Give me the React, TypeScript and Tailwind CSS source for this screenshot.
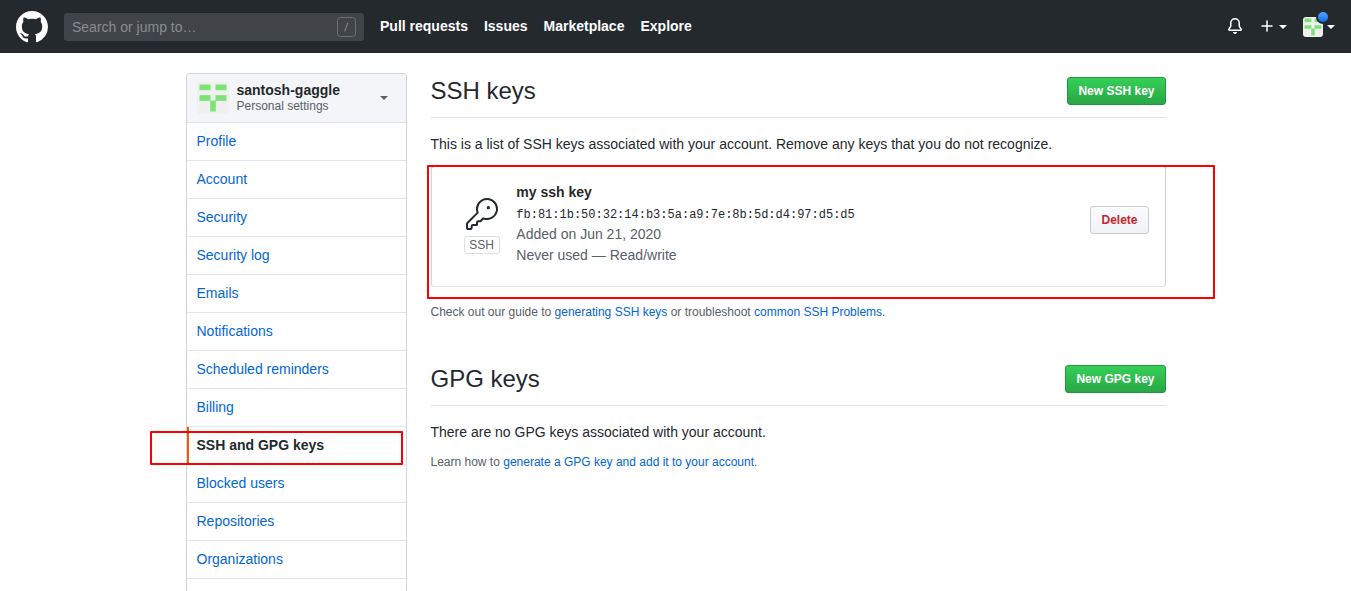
import React from "react";

function GithubMark() {
  return (
    <svg className="h-8 w-8 fill-white" viewBox="0 0 16 16">
      <path
        fillRule="evenodd"
        d="M8 0C3.58 0 0 3.58 0 8c0 3.54 2.29 6.53 5.47 7.59.4.07.55-.17.55-.38 0-.19-.01-.82-.01-1.49-2.01.37-2.53-.49-2.69-.94-.09-.23-.48-.94-.82-1.13-.28-.15-.68-.52-.01-.53.63-.01 1.08.58 1.23.82.72 1.21 1.87.87 2.33.66.07-.52.28-.87.51-1.07-1.78-.2-3.64-.89-3.64-3.95 0-.87.31-1.59.82-2.15-.08-.2-.36-1.02.08-2.12 0 0 .67-.21 2.2.82.64-.18 1.32-.27 2-.27s1.36.09 2 .27c1.53-1.04 2.2-.82 2.2-.82.44 1.1.16 1.92.08 2.12.51.56.82 1.27.82 2.15 0 3.07-1.87 3.75-3.65 3.95.29.25.54.73.54 1.48 0 1.07-.01 1.93-.01 2.2 0 .21.15.46.55.38A8.01 8.01 0 0016 8c0-4.42-3.58-8-8-8z"
      />
    </svg>
  );
}

function BellIcon() {
  return (
    <svg className="h-4 w-4 fill-white" viewBox="0 0 16 16">
      <path d="M8 16a2 2 0 001.985-1.75c.017-.137-.097-.25-.235-.25h-3.5c-.138 0-.252.113-.235.25A2 2 0 008 16z" />
      <path
        fillRule="evenodd"
        d="M8 1.5A3.5 3.5 0 004.5 5v2.947c0 .346-.102.683-.294.97l-1.703 2.556a.018.018 0 00-.003.01l.001.006c0 .002.002.004.004.006a.017.017 0 00.006.004l.007.001h10.964l.007-.001a.016.016 0 00.006-.004.016.016 0 00.004-.006l.001-.007a.017.017 0 00-.003-.01l-1.703-2.554a1.75 1.75 0 01-.294-.97V5A3.5 3.5 0 008 1.5zM3 5a5 5 0 0110 0v2.947c0 .05.015.098.042.139l1.703 2.555A1.518 1.518 0 0113.482 13H2.518a1.518 1.518 0 01-1.263-2.36l1.703-2.554A.25.25 0 003 7.947V5z"
      />
    </svg>
  );
}

function PlusIcon() {
  return (
    <svg className="h-4 w-4 fill-white" viewBox="-0.25 -0.25 16 16">
      <path d="M7.75 2a.75.75 0 01.75.75V7h4.25a.75.75 0 110 1.5H8.5v4.25a.75.75 0 11-1.5 0V8.5H2.75a.75.75 0 010-1.5H7V2.75A.75.75 0 017.75 2z" />
    </svg>
  );
}

function KeyIcon() {
  return (
    <svg className="h-8 w-8 fill-[#24292e]" viewBox="0 0 24 24">
      <path d="M16.75 8.5a1.25 1.25 0 100-2.5 1.25 1.25 0 000 2.5z" />
      <path
        fillRule="evenodd"
        d="M15.75 0a8.25 8.25 0 00-7.851 10.79L.513 18.178A1.75 1.75 0 000 19.414v2.836C0 23.217.784 24 1.75 24h1.5A1.75 1.75 0 005 22.25v-1a.25.25 0 01.25-.25h2.735a.75.75 0 00.545-.22l.214-.213A.875.875 0 009 19.948V18.5a.25.25 0 01.25-.25h1.086c.464 0 .91-.184 1.237-.513l1.636-1.636A8.25 8.25 0 1015.75 0zM9 8.25a6.75 6.75 0 114.288 6.287.75.75 0 00-.804.168l-1.971 1.972a.25.25 0 01-.177.073H9.25A1.75 1.75 0 007.5 18.5v1H5.25a1.75 1.75 0 00-1.75 1.75v1a.25.25 0 01-.25.25h-1.5a.25.25 0 01-.25-.25v-2.836a.25.25 0 01.073-.177l7.722-7.721a.75.75 0 00.168-.804A6.73 6.73 0 019 8.25z"
      />
    </svg>
  );
}

function Caret({ className = "" }: { className?: string }) {
  return (
    <span
      className={`h-0 w-0 border-x-4 border-t-4 border-x-transparent ${className}`}
    />
  );
}

function Identicon({ className = "" }: { className?: string }) {
  return (
    <svg className={`block ${className}`} viewBox="0 0 420 420">
      <rect width="420" height="420" fill="#f0f0f0" />
      <g fill="#7ce376">
        <rect x="33" y="33" width="144" height="74" />
        <rect x="243" y="33" width="144" height="74" />
        <rect x="33" y="173" width="144" height="74" />
        <rect x="243" y="173" width="144" height="74" />
        <rect x="173" y="243" width="74" height="144" />
      </g>
    </svg>
  );
}

const NAV = ["Pull requests", "Issues", "Marketplace", "Explore"];

function Header() {
  return (
    <header className="flex h-[53px] items-center bg-[#24292e] px-4 pb-px pt-0.5">
      <GithubMark />
      <div className="ml-4 flex h-7 w-[300px] items-center justify-between rounded-[3px] bg-[#404448] pl-2 pr-2">
        <span className="text-sm text-[#8a8d90]">Search or jump to…</span>
        <svg className="h-5 w-[19px]" viewBox="0 0 19 20" fill="none" stroke="#6c7074">
          <rect x="0.5" y="0.5" width="18" height="19" rx="3" />
          <path d="M10.9 5.8L7.6 14.5" stroke="#8d9094" />
        </svg>
      </div>
      <nav className="ml-4 flex gap-4 pb-0.5 text-sm font-bold leading-[21px] text-white">
        {NAV.map((n) => (
          <a key={n}>{n}</a>
        ))}
      </nav>
      <div className="ml-auto flex items-center pb-0.5">
        <BellIcon />
        <div className="ml-4 flex items-center gap-1">
          <PlusIcon />
          <Caret className="mt-0.5 border-t-white" />
        </div>
        <div className="relative ml-4 flex items-center gap-1">
          <Identicon className="mt-0.5 h-5 w-5 rounded-[3px]" />
          <Caret className="mt-0.5 border-t-white" />
          <span className="absolute left-[13px] top-[-5px] flex h-3.5 w-3.5 items-center justify-center rounded-full bg-[#24292e]">
            <span className="h-2.5 w-2.5 rounded-full bg-linear-to-b from-[#54a3ff] to-[#006eed]" />
          </span>
        </div>
      </div>
    </header>
  );
}

const MENU = [
  "Profile",
  "Account",
  "Security",
  "Security log",
  "Emails",
  "Notifications",
  "Scheduled reminders",
  "Billing",
  "SSH and GPG keys",
  "Blocked users",
  "Repositories",
  "Organizations",
];

function MenuItem({ label }: { label: string }) {
  if (label === "SSH and GPG keys") {
    return (
      <div className="relative flex h-[38px] border-b border-[#e1e4e8] font-bold">
        <span className="w-0.5 bg-[#e36209]" />
        <a className="py-2 pl-2">{label}</a>
        <span className="absolute left-[-37px] top-1 h-[34px] w-[253px] rounded-[1px] border-2 border-[#ff0000]" />
      </div>
    );
  }
  return (
    <a className="block h-[38px] border-b border-[#e1e4e8] px-2.5 py-2 text-[#0366d6]">
      {label}
    </a>
  );
}

function Sidebar() {
  return (
    <aside className="h-[560px] w-[221px] shrink-0 rounded-[3px] border border-[#d1d5da] text-sm leading-[21px]">
      <div className="flex h-[49px] items-center rounded-t-[2px] border-b border-[#e1e4e8] bg-[#f3f5f8] pl-[10.5px] pr-[18px]">
        <Identicon className="h-8 w-8 rounded-[3px]" />
        <div className="ml-[7.5px]">
          <div className="font-bold leading-[17px]">santosh-gaggle</div>
          <div className="text-xs leading-[15px] text-[#586069]">Personal settings</div>
        </div>
        <Caret className="ml-auto border-t-[#586069]" />
      </div>
      {MENU.map((m) => (
        <MenuItem key={m} label={m} />
      ))}
    </aside>
  );
}

function SectionHead({ title, action }: { title: string; action: string }) {
  return (
    <div className="flex h-[45px] items-start justify-between border-b border-[#e1e4e8]">
      <h2 className="text-2xl leading-9">{title}</h2>
      <button className="mt-1 h-7 rounded-[3px] border border-[#269542] bg-linear-to-b from-[#34d058] to-[#28a745] px-2.5 text-xs font-bold leading-5 text-white">
        {action}
      </button>
    </div>
  );
}

function KeyCard() {
  return (
    <div className="relative mt-[11px] flex h-[121px] items-start rounded-[3px] border border-[#d1d5da] border-b-[#e1e4e8]">
      <div className="ml-8 mt-[31px] flex w-9 flex-col items-center">
        <KeyIcon />
        <span className="mt-1.5 flex h-[18px] w-9 items-center justify-center rounded-[3px] border border-[#dcdee1] text-xs text-[#586069]">
          SSH
        </span>
      </div>
      <div className="ml-[16.8px] mt-[15px] text-sm leading-[21px] text-[#586069]">
        <div className="font-bold text-[#24292e]">my ssh key</div>
        <code className="-mb-px block pt-0.5 font-['Liberation_Mono',monospace] text-xs leading-5 text-[#24292e]">
          fb:81:1b:50:32:14:b3:5a:a9:7e:8b:5d:d4:97:d5:d5
        </code>
        <div>Added on Jun 21, 2020</div>
        <div>Never used — Read/write</div>
      </div>
      <button className="ml-auto mr-4 mt-[39px] h-7 rounded-[3px] border border-[#c8ccd0] bg-linear-to-b from-[#fafbfc] to-[#eff3f6] px-2.5 text-xs font-bold leading-5 text-[#cb2431]">
        Delete
      </button>
      <span className="absolute left-[-4.5px] top-[-2px] h-[134px] w-[788px] rounded-[1px] border-2 border-[#ff0000]" />
    </div>
  );
}

export default function App() {
  return (
    <div className="h-[591px] overflow-hidden bg-white font-['Liberation_Sans',Arial,sans-serif] text-[#24292e]">
      <Header />
      <div className="mx-auto flex w-[980px] items-start pt-5">
        <Sidebar />
        <main className="ml-6 min-w-0 flex-1">
          <SectionHead title="SSH keys" action="New SSH key" />
          <p className="mt-4 text-sm leading-[21px]">
            This is a list of SSH keys associated with your account. Remove any keys that you do not recognize.
          </p>
          <KeyCard />
          <p className="mt-4 text-xs leading-[18px] text-[#586069]">
            Check out our guide to <a className="text-[#0366d6]">generating SSH keys</a> or troubleshoot{" "}
            <a className="text-[#0366d6]">common SSH Problems</a>.
          </p>
          <div className="mt-10">
            <SectionHead title="GPG keys" action="New GPG key" />
          </div>
          <p className="mt-4 text-sm leading-[21px]">There are no GPG keys associated with your account.</p>
          <p className="mt-2.5 text-xs leading-[18px] text-[#586069]">
            Learn how to <a className="text-[#0366d6]">generate a GPG key and add it to your account</a>.
          </p>
        </main>
      </div>
    </div>
  );
}
